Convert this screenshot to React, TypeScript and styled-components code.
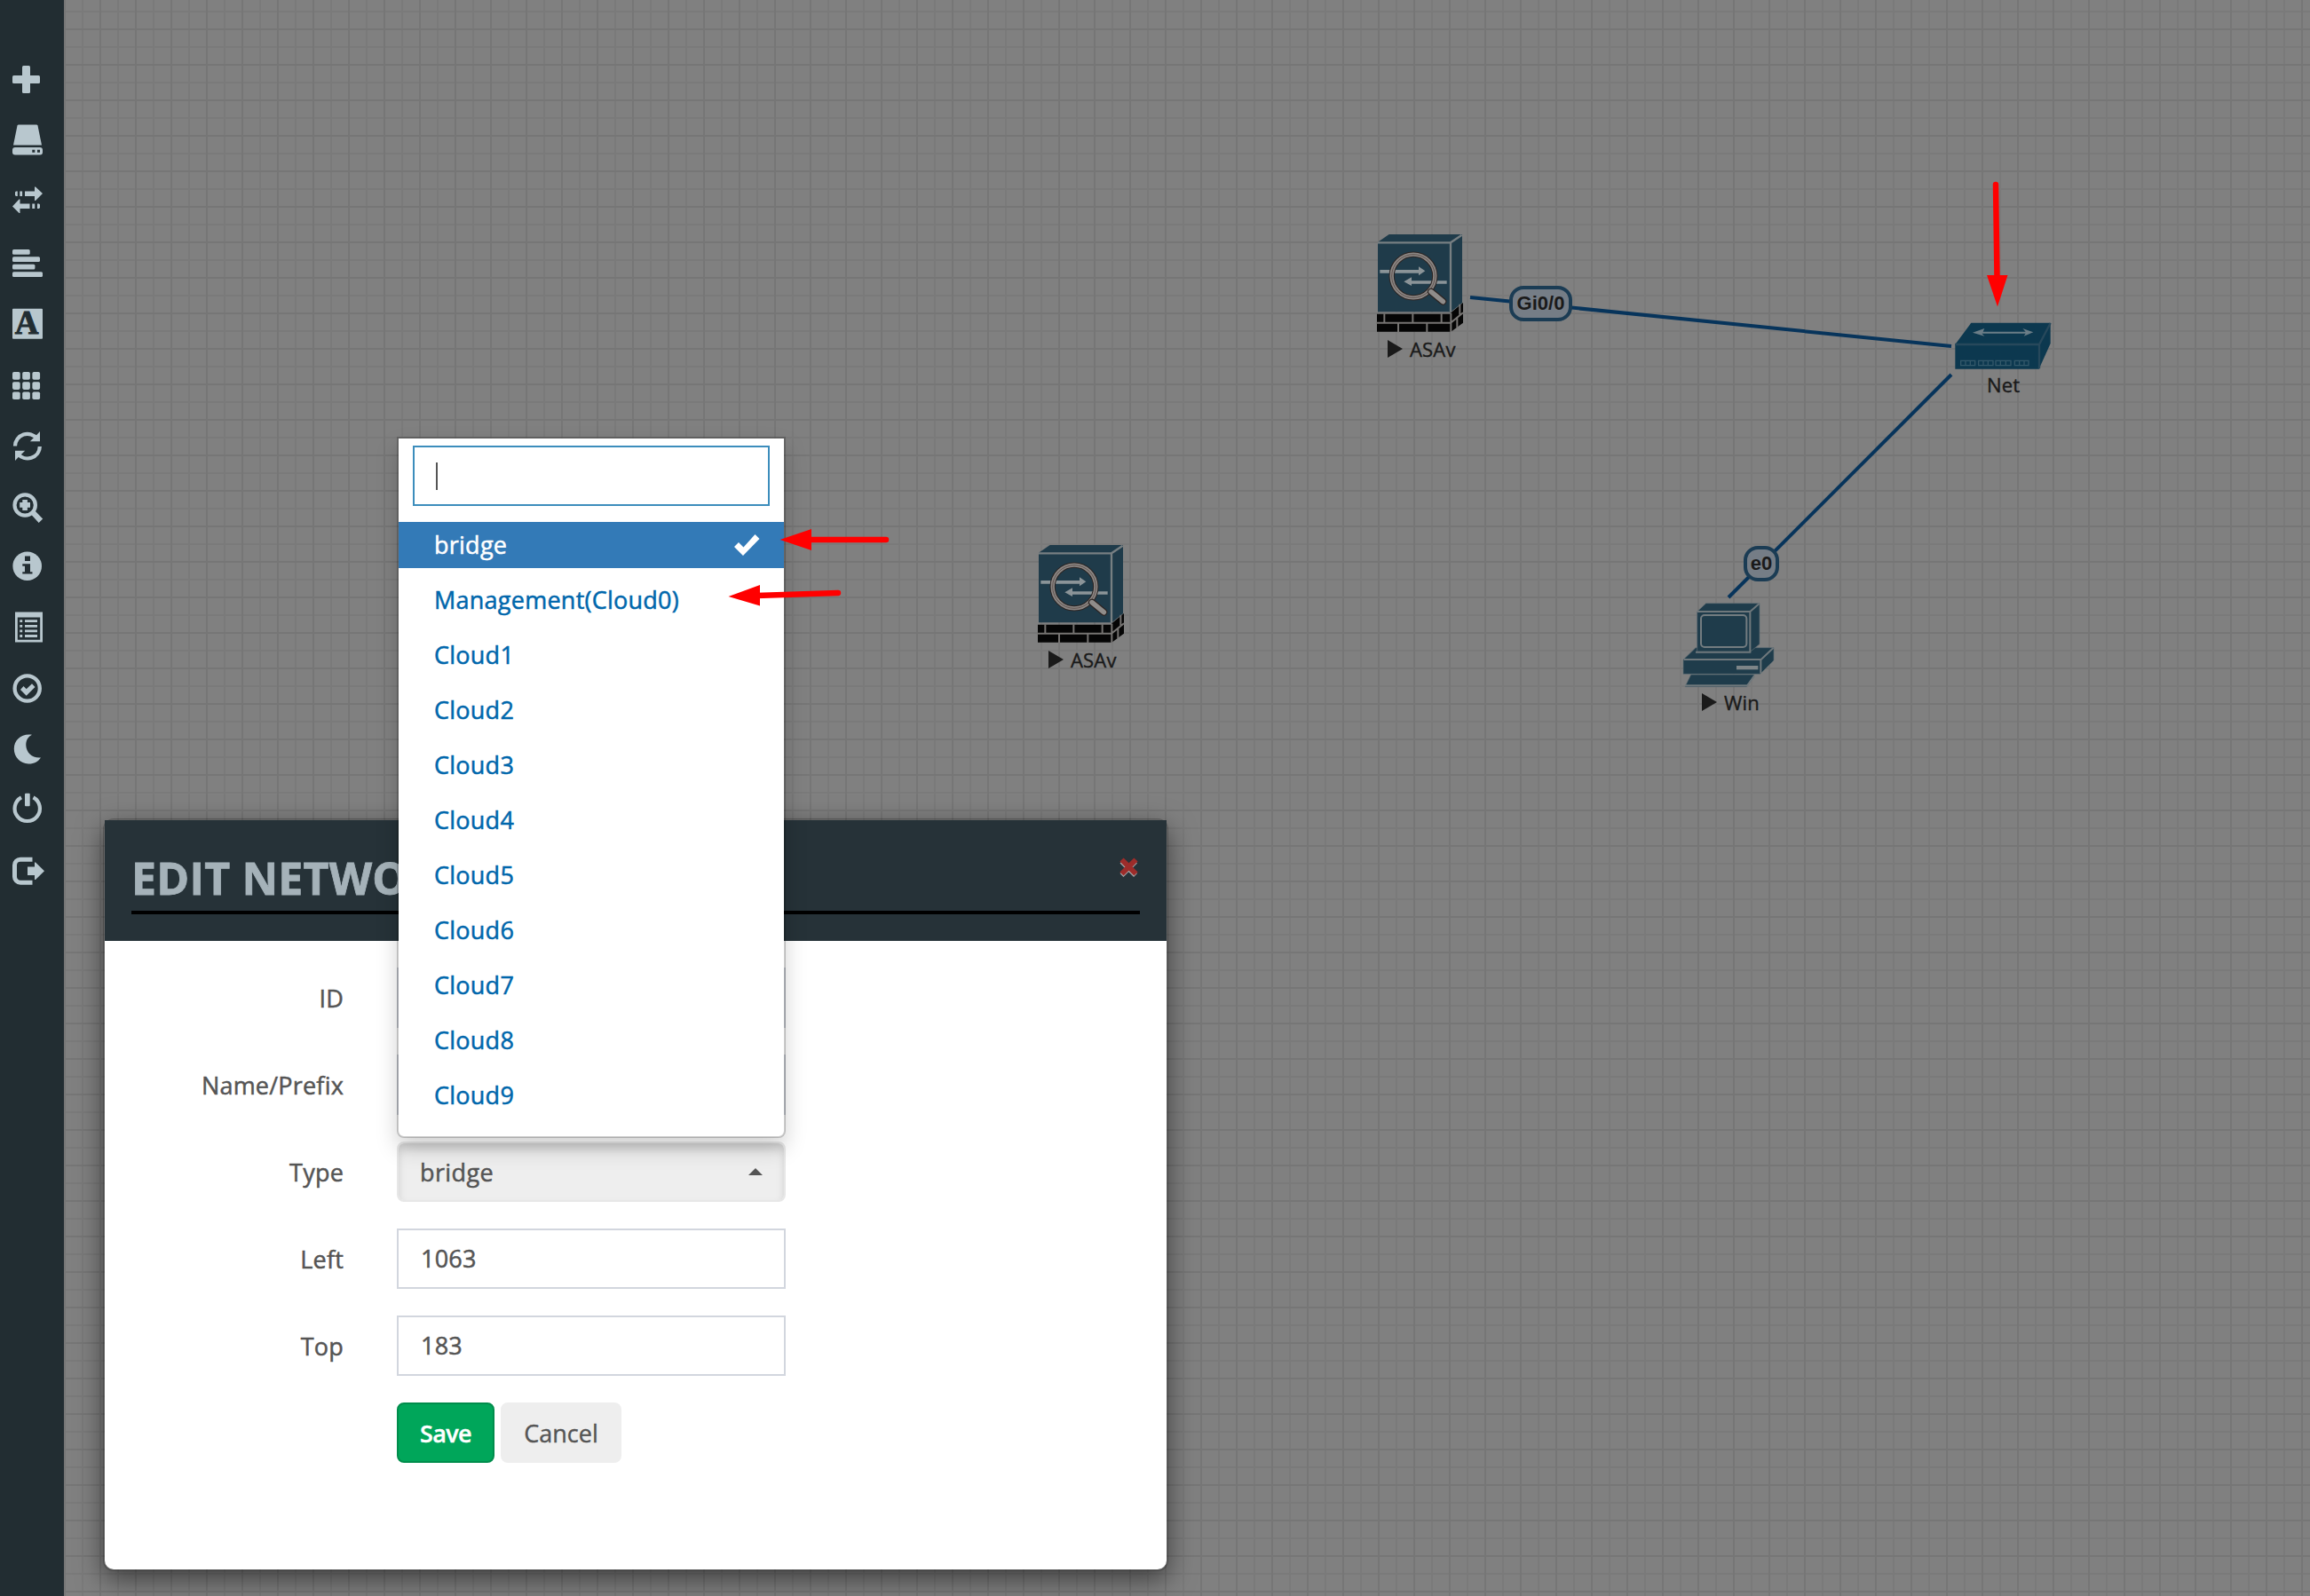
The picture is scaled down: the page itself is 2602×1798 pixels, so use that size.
import React from "react";
import styled, { createGlobalStyle } from "styled-components";

const GlobalStyle = createGlobalStyle`
  * { box-sizing: border-box; }
  body {
    margin: 0;
    background: #808080;
    font-family: "Open Sans", "Noto Sans", sans-serif;
    color: #555;
    overflow: hidden;
  }
`;

const Page = styled.div`
  display: flex;
  width: 2602px;
  height: 1798px;
  overflow: hidden;
`;

const Sidebar = styled.nav`
  flex: none;
  width: 72px;
  padding: 69px 0 0 11px;
  background: #222d32;
  display: flex;
  flex-direction: column;
  align-items: flex-start;
`;

const SideIcon = styled.svg<{ $gap: number }>`
  display: block;
  flex: none;
  width: 40px;
  height: 41px;
  margin-top: ${(p) => p.$gap}px;
  fill: #b8c7ce;
  color: #b8c7ce;
`;

const Canvas = styled.main`
  position: relative;
  flex: 1;
  padding: 922px 0 0 44px;
  background-color: #808080;
  background-image:
    linear-gradient(to right, #767676 2px, transparent 2px),
    linear-gradient(to bottom, #767676 2px, transparent 2px),
    linear-gradient(to right, #7a7a7a 2px, transparent 2px),
    linear-gradient(to bottom, #7a7a7a 2px, transparent 2px);
  background-size: 40px 40px, 40px 40px, 20px 20px, 20px 20px;
  background-position: 0 32px;
`;

const Wires = styled.svg`
  position: absolute;
  left: 0;
  top: 0;
  width: 2530px;
  height: 1798px;
  pointer-events: none;
`;

const Annotations = styled(Wires)`
  z-index: 5;
`;

const Node = styled.div<{ $x: number; $y: number; $w: number }>`
  position: absolute;
  left: ${(p) => p.$x}px;
  top: ${(p) => p.$y}px;
  width: ${(p) => p.$w}px;
  display: flex;
  flex-direction: column;
`;

const NodeArt = styled.svg<{ $h: number }>`
  display: block;
  width: 100%;
  height: ${(p) => p.$h}px;
`;

const NodeLabel = styled.div<{ $indent: number; $top: number }>`
  display: flex;
  align-items: center;
  gap: 8px;
  height: 30px;
  margin: ${(p) => p.$top}px 0 0 ${(p) => p.$indent}px;
  font-size: 22px;
  line-height: 30px;
  letter-spacing: 0.2px;
  color: #1a1a1a;
  -webkit-text-stroke: 0.4px #1a1a1a;
  white-space: nowrap;
`;

const Play = styled.i`
  border-left: 17px solid #1a1a1a;
  border-top: 10px solid transparent;
  border-bottom: 10px solid transparent;
`;

const Port = styled.div<{ $x: number; $y: number; $w: number }>`
  position: absolute;
  left: ${(p) => p.$x}px;
  top: ${(p) => p.$y}px;
  width: ${(p) => p.$w}px;
  height: 40px;
  display: flex;
  align-items: center;
  justify-content: center;
  padding-bottom: 1px;
  border: 4px solid #1b3c54;
  border-radius: 16px;
  background: #757d86;
  color: #1a1a1a;
  font: bold 22px "Liberation Sans", Arial, sans-serif;
`;

const Modal = styled.section`
  position: relative;
  width: 1200px;
  height: 848px;
  border: 2px solid rgba(0, 0, 0, 0.2);
  border-radius: 12px;
  background: #fff;
  background-clip: padding-box;
  box-shadow: 0 10px 30px rgba(0, 0, 0, 0.5);
`;

const ModalHeader = styled.header`
  height: 136px;
  padding: 30px;
  background: #263238;
`;

const TitleBar = styled.div`
  display: flex;
  justify-content: space-between;
  height: 76px;
  border-bottom: 4px solid #000;
`;

const Title = styled.h4`
  margin: 0;
  font-size: 50px;
  font-weight: 700;
  line-height: 70px;
  letter-spacing: 0.2px;
  color: #a5b2b9;
  -webkit-text-stroke: 0.8px #a5b2b9;
  white-space: nowrap;
`;

const Close = styled.svg`
  width: 24px;
  height: 26px;
  margin-top: 10px;
`;

const Form = styled.div`
  display: flex;
  flex-direction: column;
  gap: 30px;
  padding-top: 30px;
  letter-spacing: 0.2px;
`;

const Row = styled.div`
  display: grid;
  grid-template-columns: 269px 438px;
  column-gap: 60px;
  height: 68px;
  align-items: center;
`;

const Label = styled.label`
  text-align: right;
  font-size: 27px;
  font-weight: 500;
  color: #555;
  -webkit-text-stroke: 0.5px #555;
`;

const Input = styled.div`
  height: 68px;
  padding: 0 25px;
  border: 2px solid #d2d6de;
  background: #fff;
  font-size: 27px;
  font-weight: 500;
  line-height: 64px;
  color: #555;
  -webkit-text-stroke: 0.5px #555;
`;

const Select = styled.div`
  position: relative;
  height: 68px;
`;

const SelectButton = styled.button`
  width: 100%;
  height: 68px;
  padding: 0 24px;
  display: flex;
  align-items: center;
  justify-content: space-between;
  border: 2px solid #e7e7e7;
  border-radius: 8px;
  background: #eee;
  box-shadow: inset 0 6px 10px rgba(0, 0, 0, 0.125);
  font: 500 27px "Open Sans", "Noto Sans", sans-serif;
  letter-spacing: 0.4px;
  color: #555;
  -webkit-text-stroke: 0.5px #555;
`;

const Caret = styled.i`
  border: 8px solid transparent;
  border-top: 0;
  border-bottom-color: #555;
`;

const Menu = styled.div`
  position: absolute;
  z-index: 2;
  left: 0;
  bottom: 72px;
  width: 438px;
  height: 790px;
  border: 2px solid rgba(0, 0, 0, 0.2);
  border-radius: 0 0 8px 8px;
  background: #fff;
  background-clip: padding-box;
  box-shadow: 0 12px 24px rgba(0, 0, 0, 0.175);
`;

const Search = styled.div`
  display: flex;
  align-items: center;
  width: 402px;
  height: 68px;
  margin: 8px 16px 18px;
  padding-left: 24px;
  border: 2px solid #3c8dbc;
`;

const TextCursor = styled.i`
  width: 2px;
  height: 31px;
  background: #555;
`;

const Options = styled.ul`
  margin: 0;
  padding: 0;
  list-style: none;
  display: flex;
  flex-direction: column;
  gap: 10px;
`;

const Option = styled.li<{ $active?: boolean }>`
  display: flex;
  justify-content: space-between;
  align-items: center;
  height: 52px;
  padding: 0 27px 1px 40px;
  font-size: 27px;
  font-weight: 500;
  letter-spacing: 0.25px;
  color: ${(p) => (p.$active ? "#fff" : "#0067ac")};
  -webkit-text-stroke: 0.5px ${(p) => (p.$active ? "#fff" : "#0067ac")};
  background: ${(p) => (p.$active ? "#337ab7" : "#fff")};
`;

const Buttons = styled.div`
  display: flex;
  gap: 7px;
  padding-left: 329px;
`;

const Button = styled.button<{ $primary?: boolean }>`
  width: ${(p) => (p.$primary ? 110 : 136)}px;
  height: 68px;
  padding: 0;
  border: 2px solid ${(p) => (p.$primary ? "#008d4c" : "#eee")};
  border-radius: 8px;
  background: ${(p) => (p.$primary ? "#00a65a" : "#eee")};
  color: ${(p) => (p.$primary ? "#fff" : "#555")};
  font: ${(p) => (p.$primary ? 600 : 500)} 27px "Open Sans", "Noto Sans", sans-serif;
  letter-spacing: ${(p) => (p.$primary ? -0.6 : 0)}px;
  -webkit-text-stroke: 0.4px ${(p) => (p.$primary ? "#fff" : "#555")};
`;

const DARK = "#222d32";

const sideIcons: { cy: number; art: React.ReactNode }[] = [
  { cy: 89.5, art: <><rect x="14" y="85" width="31" height="9" rx="1.5" /><rect x="25" y="74" width="9" height="31" rx="1.5" /></> },
  { cy: 157, art: <>
    <path d="M20.5 140h21l1 1 4.500 22h-32l4.500-22z" />
    <rect x="14" y="165.500" width="34" height="8.500" rx="3" />
    <path fill={DARK} d="M36.300 168.200h3v3h-3zM42 168.200h3v3h-3z" /></> },
  { cy: 225, art: <>
    <path d="M28 215h11v-5h1l8 7.500-8 8h-1v-5H28zM22.300 215h2.800v5.500h-2.800zM19.800 215v5.500H18l-1-1V216l1-1z" />
    <path d="M33.500 229h-11v-5h-1l-7.500 8 7.500 7.500h1v-5h11zM36.300 229h2.900v5.500h-2.900zM42 229h2l1 1v3.500l-1 1h-2z" /></> },
  { cy: 296.5, art: <>
    <rect x="14" y="281" width="19.700" height="5.700" rx="1.500" /><rect x="14" y="289.300" width="31" height="5.700" rx="1.500" />
    <rect x="14" y="297.800" width="25.400" height="5.700" rx="1.500" /><rect x="14" y="306.200" width="34" height="5.800" rx="1.500" /></> },
  { cy: 364, art: <>
    <rect x="14" y="347.300" width="34" height="34" rx="1" />
    <text x="30" y="375.500" textAnchor="middle" fill={DARK} stroke={DARK} strokeWidth="1" fontFamily="Liberation Serif, serif" fontWeight="700" fontSize="37">A</text></> },
  { cy: 434.5, art: <>{[419, 430.2, 441.4].map((y) => [14, 25.2, 36.4].map((x) => <rect key={x + y} x={x} y={y} width="8.700" height="8.700" rx="1.800" />))}</> },
  { cy: 502, art: <>
    <path fill="none" stroke="currentColor" strokeWidth="4.200" d="M17 502a13.800 13.800 0 0 1 24.800-8.200M44.800 502.500a13.800 13.800 0 0 1-24.800 8" />
    <path d="M45 485.500v11.200h-11.200l3.800-3.800 3.200-3zM17 518.500v-11.200h11.200l-3.800 3.800-3.200 3z" /></> },
  { cy: 571, art: <>
    <circle cx="28.200" cy="568.500" r="11.700" fill="none" stroke="currentColor" strokeWidth="4.200" />
    <path d="M25.300 562.500h5.600v3.100h3.100v5.700h-3.100v3.100h-5.600v-3.100h-3.100v-5.700h3.100zM34.500 578.500l4.500-4 9.200 9.500-4.500 4.500z" /></> },
  { cy: 637, art: <>
    <circle cx="30.700" cy="637.200" r="16.300" />
    <path fill={DARK} d="M28 626h6v5.500h-6zM25.300 634.800H34v9h2.500v2.200H25.300v-2.200H28v-6.500h-2.700z" /></> },
  { cy: 706, art: <>
    <path fillRule="evenodd" d="M17 689h31v34H17zM19.800 695v25.200h25.400V695z" />
    <path d="M22.300 697.800h2.900v2.800h-2.900zM28 697.800h14v2.800H28zM22.300 703.400h2.900v2.800h-2.900zM28 703.400h14v2.800H28zM22.300 709h2.900v2.800h-2.900zM28 709h14v2.800H28zM22.300 714.600h2.900v2.800h-2.900zM28 714.600h14v2.800H28z" /></> },
  { cy: 775, art: <>
    <circle cx="30.700" cy="775" r="14.100" fill="none" stroke="currentColor" strokeWidth="4.300" />
    <path d="M23 776.500l3.500-4 3.200 3.200 6.300-6 3.500 3.800-9.800 9.700z" /></> },
  { cy: 843, art: <path d="M36 827.300C31.500 829.500 29 834 29.300 839.500c.3 7.500 7 14.500 16.700 13.500-3 4.500-8 7.200-14 7-9-.2-16.200-7.500-16.200-17 0-9.700 8.200-17.400 20.200-15.700z" /> },
  { cy: 910, art: <>
    <path fill="none" stroke="currentColor" strokeWidth="4.200" d="M24 897.800a14.200 14.200 0 1 0 13.500 0" />
    <rect x="28" y="893.300" width="5.700" height="14.500" rx="1" /></> },
  { cy: 981, art: <>
    <path fill="none" stroke="currentColor" strokeWidth="5" d="M36.500 967.700H23a6.500 6.500 0 0 0-6.500 6.500v13a6.500 6.500 0 0 0 6.500 6.500h13.500" />
    <path d="M31 976h8v-5h1l10 9.700-10 9.800h-1v-5h-8z" /></> },
];

const Firewall = () => (
  <NodeArt $h={115} viewBox="60 66 300 345">
    <path fill="#1f3b4a" d="M66 98L104 72h247v232l-38 30H66z" />
    <path fill="none" stroke="#777f82" strokeWidth="7" d="M66 100h246v234M312 100l38-26" />
    <path fill="#050505" d="M63 341h250v60H63zM313 337l41-34v68l-41 30z" />
    <path fill="none" stroke="#767472" strokeWidth="6" d="M60 371h252l42-34M88 340v31M184 340v31M281 340v31M135 373v30M232 373v30M313 338v64M343 308v38M334 354v34" />
    <path fill="#8b9498" d="M73 192h131v-11l22 15-22 15v-8H73zM299 229H180v-12l-26 15 26 14v-7h119z" />
    <g fill="none">
      <circle cx="186" cy="213" r="73" stroke="#2c2422" strokeWidth="19" />
      <circle cx="186" cy="213" r="73" stroke="#8a8684" strokeWidth="13" />
      <circle cx="186" cy="213" r="73" stroke="#4d3a33" strokeWidth="2" />
      <path stroke="#2c2422" strokeWidth="24" strokeLinecap="round" d="M246 266l40 33" />
      <path stroke="#8f8c8a" strokeWidth="17" strokeLinecap="round" d="M246 266l40 33" />
    </g>
  </NodeArt>
);

const Switch = () => (
  <NodeArt $h={58} viewBox="120 540 336 174">
    <path fill="#0c384f" d="M127 624l54-73h268v70l-39 86H127z" />
    <path fill="none" stroke="#27485b" strokeWidth="7" d="M127 624h284l38-72M411 624v82" />
    <path fill="#6b7d87" d="M186 584l40-14-5 11h144l-10-11 36 13-32 13 6-9H217l9 9z" />
    <path fill="none" stroke="#33586a" strokeWidth="4" d="M146 679h48v16h-48zM206 679h49v16h-49zM264 679h51v16h-51zM328 679h47v16h-47zM162 679v16M178 679v16M222 679v16M238 679v16M280 679v16M298 679v16M344 679v16M360 679v16" />
  </NodeArt>
);

const Computer = () => (
  <NodeArt $h={97} viewBox="72 264 321 291">
    <g fill="#1f3c4b" stroke="#5f6c72" strokeWidth="2">
      <path d="M78 460l42-41h264v43l-46 46H78z" />
      <path d="M104 510h214l-26 41H84z" />
      <path d="M125 297l30-28h181v138l-32 26H125z" />
    </g>
    <path fill="none" stroke="#6f787c" strokeWidth="6" d="M125 297h179v135M304 297l31-27M80 459h260v47M341 459l42-40M120 434h187M84 547h210l24-32" />
    <rect x="138" y="309" width="154" height="108" rx="12" fill="#1f3c4b" stroke="#737c80" strokeWidth="6" />
    <path fill="#7d8588" d="M258 480h73v13h-73z" />
  </NodeArt>
);

const clouds = ["Management(Cloud0)", "Cloud1", "Cloud2", "Cloud3", "Cloud4", "Cloud5", "Cloud6", "Cloud7", "Cloud8", "Cloud9"];

export default function App() {
  return (
    <Page>
      <GlobalStyle />
      <Sidebar>
        {sideIcons.map((icon, i) => (
          <SideIcon
            key={icon.cy}
            $gap={i === 0 ? 0 : icon.cy - sideIcons[i - 1].cy - 41}
            viewBox={`11 ${icon.cy - 20.5} 40 41`}
          >
            {icon.art}
          </SideIcon>
        ))}
      </Sidebar>
      <Canvas>
        <Wires viewBox="72 0 2530 1798" stroke="#07345b" strokeWidth="4">
          <path d="M1656 335L2198 390M2198 422L1947 673" />
        </Wires>
        <Node $x={1478} $y={262} $w={100}>
          <Firewall />
          <NodeLabel $indent={13} $top={1}><Play />ASAv</NodeLabel>
        </Node>
        <Node $x={1096} $y={612} $w={100}>
          <Firewall />
          <NodeLabel $indent={13} $top={1}><Play />ASAv</NodeLabel>
        </Node>
        <Node $x={2128} $y={360} $w={112}>
          <Switch />
          <NodeLabel $indent={38} $top={0}>Net</NodeLabel>
        </Node>
        <Node $x={1822} $y={678} $w={107}>
          <Computer />
          <NodeLabel $indent={23} $top={1}><Play />Win</NodeLabel>
        </Node>
        <Port $x={1628} $y={322} $w={71}>Gi0/0</Port>
        <Port $x={1892} $y={615} $w={40}>e0</Port>

        <Modal>
          <ModalHeader>
            <TitleBar>
              <Title>EDIT NETWORK</Title>
              <Close viewBox="0 0 24 26">
                <path stroke="#a5abae" strokeWidth="5.500" d="M3.500 6.500l15.500 15.500M19 6.500L3.500 22" />
                <path stroke="#9c2c2a" strokeWidth="6" d="M3.500 4.500l16 16M19.500 4.500L3.500 20.500" />
              </Close>
            </TitleBar>
          </ModalHeader>
          <Form>
            <Row><Label>ID</Label><Input /></Row>
            <Row><Label>Name/Prefix</Label><Input /></Row>
            <Row>
              <Label>Type</Label>
              <Select>
                <SelectButton>bridge<Caret /></SelectButton>
                <Menu>
                  <Search><TextCursor /></Search>
                  <Options>
                    <Option $active>
                      bridge
                      <svg width="30" height="26" viewBox="0 0 30 26" fill="#fff"><path d="M1 15l5-5 5.500 5.500L24.500 1 29.500 6 11 25z" /></svg>
                    </Option>
                    {clouds.map((c) => <Option key={c}>{c}</Option>)}
                  </Options>
                </Menu>
              </Select>
            </Row>
            <Row><Label>Left</Label><Input>1063</Input></Row>
            <Row><Label>Top</Label><Input>183</Input></Row>
            <Buttons><Button $primary>Save</Button><Button>Cancel</Button></Buttons>
          </Form>
        </Modal>

        <Annotations viewBox="72 0 2530 1798" fill="#f00" stroke="none">
          <path stroke="#f00" strokeWidth="6.500" strokeLinecap="round" d="M910 608h88M852 671l92-3M2248 208l1.500 104" />
          <path d="M878.500 608l35.500-12v24zM820.500 672l35.500-13v23.500zM2250 345.500l-12-35.500h23.500z" />
        </Annotations>
      </Canvas>
    </Page>
  );
}
